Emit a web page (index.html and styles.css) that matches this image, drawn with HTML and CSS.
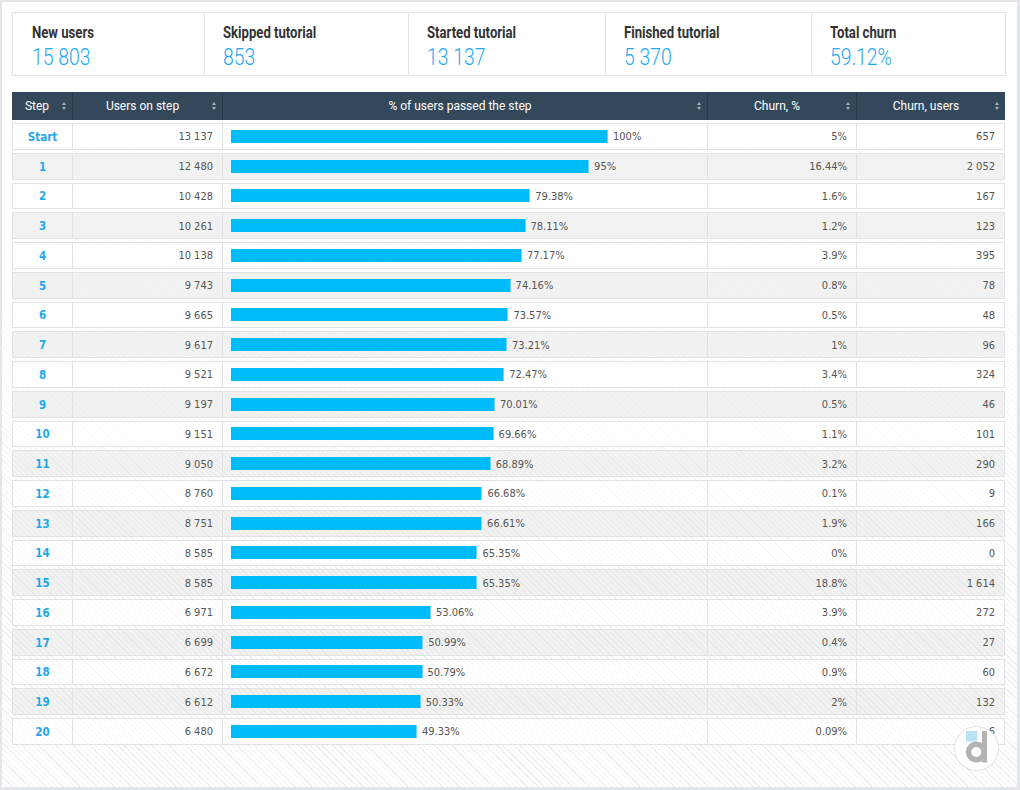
FILE: index.html
```html
<!DOCTYPE html>
<html>
<head>
<meta charset="utf-8">
<link rel="stylesheet" href="styles.css">
</head>
<body>
<div class="panel">
  <div class="cards">
    <div class="card"><div class="label"><span>New users</span></div><div class="value"><span>15 803</span></div></div>
    <div class="card"><div class="label"><span>Skipped tutorial</span></div><div class="value"><span>853</span></div></div>
    <div class="card"><div class="label"><span>Started tutorial</span></div><div class="value"><span>13 137</span></div></div>
    <div class="card"><div class="label"><span>Finished tutorial</span></div><div class="value"><span>5 370</span></div></div>
    <div class="card"><div class="label"><span>Total churn</span></div><div class="value"><span>59.12%</span></div></div>
  </div>

  <div class="table">
    <div class="thead">
      <div class="th">Step<i class="sort"></i></div>
      <div class="th">Users on step<i class="sort"></i></div>
      <div class="th">% of users passed the step<i class="sort"></i></div>
      <div class="th">Churn, %<i class="sort"></i></div>
      <div class="th">Churn, users<i class="sort"></i></div>
    </div>
    <div id="rows" class="rows"></div>
  </div>

  <div class="logo">
    <svg width="44" height="44" viewBox="0 0 44 44">
      <rect x="11" y="4" width="11" height="10.5" fill="#b8e2f6"/>
      <circle cx="21.3" cy="25" r="7.75" fill="none" stroke="#b3b3b3" stroke-width="5.5"/>
      <rect x="27" y="4" width="5" height="31.5" fill="#b3b3b3"/>
    </svg>
  </div>
</div>
<script src="script.js"></script>
</body>
</html>
```

FILE: script.js
```js
var data = [
  ["Start","13 137",100,"100%","5%","657"],
  ["1","12 480",95,"95%","16.44%","2 052"],
  ["2","10 428",79.38,"79.38%","1.6%","167"],
  ["3","10 261",78.11,"78.11%","1.2%","123"],
  ["4","10 138",77.17,"77.17%","3.9%","395"],
  ["5","9 743",74.16,"74.16%","0.8%","78"],
  ["6","9 665",73.57,"73.57%","0.5%","48"],
  ["7","9 617",73.21,"73.21%","1%","96"],
  ["8","9 521",72.47,"72.47%","3.4%","324"],
  ["9","9 197",70.01,"70.01%","0.5%","46"],
  ["10","9 151",69.66,"69.66%","1.1%","101"],
  ["11","9 050",68.89,"68.89%","3.2%","290"],
  ["12","8 760",66.68,"66.68%","0.1%","9"],
  ["13","8 751",66.61,"66.61%","1.9%","166"],
  ["14","8 585",65.35,"65.35%","0%","0"],
  ["15","8 585",65.35,"65.35%","18.8%","1 614"],
  ["16","6 971",53.06,"53.06%","3.9%","272"],
  ["17","6 699",50.99,"50.99%","0.4%","27"],
  ["18","6 672",50.79,"50.79%","0.9%","60"],
  ["19","6 612",50.33,"50.33%","2%","132"],
  ["20","6 480",49.33,"49.33%","0.09%","6"]
];
var html = "";
data.forEach(function (r, i) {
  html += '<div class="row ' + (i % 2 ? 'alt' : '') + '">' +
    '<div class="cell step">' + r[0] + '</div>' +
    '<div class="cell num">' + r[1] + '</div>' +
    '<div class="cell pct"><span class="bar" style="width:' + (r[2] * 3.77).toFixed(1) + 'px"></span><span class="pv">' + r[3] + '</span></div>' +
    '<div class="cell num">' + r[4] + '</div>' +
    '<div class="cell num">' + r[5] + '</div>' +
    '</div>';
});
document.getElementById("rows").innerHTML = html;
```

FILE: styles.css
```css
html, body { margin: 0; padding: 0; }
body {
  background: #e3e7ea;
  width: 1020px;
  height: 790px;
  overflow: hidden;
}
.panel {
  position: relative;
  box-sizing: border-box;
  margin: 2px 3px 0 2px;
  width: 1015px;
  height: 785px;
  padding: 10px 11px 0 10px;
  background:
    linear-gradient(to bottom, #ffffff 0%, rgba(255,255,255,0.85) 35%, rgba(255,255,255,0) 80%),
    repeating-linear-gradient(45deg, #ffffff 0 3px, #efefef 3px 4px);
}
.cards {
  display: grid;
  grid-template-columns: 191fr 205fr 197fr 207fr 194fr;
  width: 994px;
  height: 64px;
  box-sizing: border-box;
  border: 1px solid #dfe4e8;
  background: #fff;
}
.card {
  border-left: 1px solid #dfe4e8;
  padding: 11px 0 0 18px;
  overflow: hidden;
  font-family: Roboto, "Liberation Sans", sans-serif;
}
.card:first-child { border-left: none; padding-left: 19px; }
.label {
  height: 19px;
  line-height: 18px;
  font-size: 16px;
  font-weight: 700;
  color: #333;
  white-space: nowrap;
}
.value {
  line-height: 28px;
  font-size: 24.5px;
  font-weight: 300;
  color: #1ea9f0;
  white-space: nowrap;
}
.label span, .value span {
  display: inline-block;
  transform: scaleX(0.82);
  transform-origin: left center;
}
.value span { transform: scaleX(0.79); }

.table {
  margin-top: 16px;
  width: 993px;
  display: flex;
  flex-direction: column;
}
.thead {
  display: grid;
  grid-template-columns: 60px 150px 485px 149px 149px;
  height: 28px;
  background: #33485b;
  margin-bottom: 3px;
}
.th {
  position: relative;
  border-left: 1px solid #26394a;
  color: #fff;
  font-family: Roboto, "Liberation Sans", sans-serif;
  font-size: 12px;
  line-height: 28px;
  text-align: center;
  padding: 0 14px 0 4px;
  white-space: nowrap;
}
.th:first-child { border-left: none; }
.sort {
  position: absolute;
  right: 5px;
  top: 10px;
  width: 5px;
  height: 8px;
}
.sort::before, .sort::after {
  content: "";
  position: absolute;
  left: 0;
  border-left: 2.5px solid transparent;
  border-right: 2.5px solid transparent;
}
.sort::before { top: 0; border-bottom: 3px solid #a9b3bc; }
.sort::after { bottom: 0; border-top: 3px solid #a9b3bc; }

.rows {
  display: flex;
  flex-direction: column;
  gap: 3px;
}
.row {
  display: grid;
  grid-template-columns: 59px 150px 485px 149px 148px;
  height: 26.75px;
  box-sizing: border-box;
  border: 1px solid #dfe3e6;
  background: rgba(255,255,255,0.55);
  font-family: "DejaVu Sans Condensed", "DejaVu Sans", sans-serif;
  font-stretch: condensed;
  font-size: 11px;
  color: #555;
}
.row.alt { background: rgba(226,226,226,0.45); }
.cell {
  border-left: 1px solid #dfe3e6;
  display: flex;
  align-items: center;
  white-space: nowrap;
  padding-top: 1px;
}
.cell:first-child { border-left: none; }
.step {
  justify-content: center;
  font-weight: bold;
  font-size: 11.5px;
  color: #1ea7ec;
}
.num {
  justify-content: flex-end;
  padding-right: 9px;
}
.pct { padding-left: 8px; }
.bar {
  display: block;
  height: 13px;
  margin-top: -1px;
  background: #00bbf9;
  box-shadow: inset -1px 0 0 #6fd3f7;
  margin-right: 5px;
  flex: none;
}
.logo {
  position: absolute;
  left: 953px;
  top: 725px;
  width: 43px;
  height: 43px;
  border-radius: 50%;
  background: #fff;
  box-shadow: 0 0 0 1px #e3e3e3, 0 1px 2px rgba(0,0,0,0.06);
  overflow: hidden;
}
.logo svg { display: block; margin: -0.5px; }
```
